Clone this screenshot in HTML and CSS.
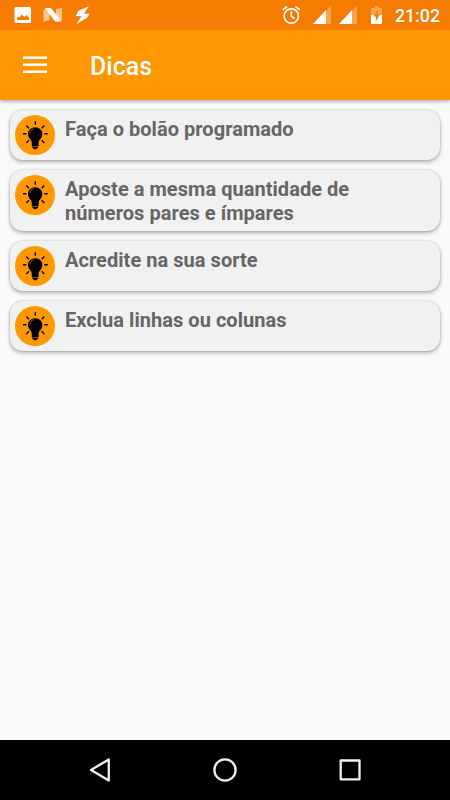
FILE: index.html
```html
<!DOCTYPE html>
<html lang="pt-BR">
<head>
<meta charset="utf-8">
<title>Dicas</title>
<link rel="stylesheet" href="styles.css">
</head>
<body>
<svg class="defs" aria-hidden="true">
  <symbol id="bulb" viewBox="0 0 40 40">
    <path d="M20.200 12.200c-4.200 0-7.200 3-7.200 6.700 0 3 1.700 4.700 3 6.300.6.900.8 2.700.8 3.800h6.800c0-1.100.2-2.900.8-3.800 1.300-1.600 3-3.300 3-6.300 0-3.700-3-6.700-7.200-6.700z"/>
    <path d="M16.800 28.800h6.800v2.300h-6.800zM16.900 31.500h6.600l-.7 1.600h-5.200zM18 33h4.400l-1 1.200h-2.400z"/>
    <path class="rays" d="M20.300 6.300v3.500M11.300 10.500l2.600 2.800M29.300 10.500l-2.600 2.800M8 18.800h3.400M29.300 18.800h3.500M11.300 28l2.700-2.700M29.300 28l-2.700-2.700"/>
    <path class="shine" d="M15 18c.1-2.300 1.500-3.800 3.500-4.200"/>
  </symbol>
</svg>
<div class="screen">
  <div class="status">
    <svg width="100" height="30" viewBox="0 0 100 30">
      <path fill="#fff" fill-rule="evenodd" d="M16 7h13.500q1.500 0 1.500 1.500V21.500q0 1.500-1.500 1.500H16q-1.500 0-1.500-1.500V8.500Q14.500 7 16 7zM17 20h12v-2.500l-2.500-2.500-2 2-3-2.500-2 3-1-1L17 18z"/>
      <path fill="#fff" opacity=".55" d="M43.500 9.500l6-1.500v12l-6 2zM56 9l6-1v12.500l-6 1.500z"/>
      <path fill="#fff" d="M45 8h6l10.500 13.500H55z"/>
      <path fill="#fff" d="M89 6.300L78.300 10.800 75.800 16l5.700.2L76.200 24.200 87.500 17.500l2-3.700-5.800-.1z"/>
    </svg>
    <div class="status-right">
      <svg width="110" height="30" viewBox="280 0 110 30">
        <g fill="none" stroke="#fff" stroke-width="1.700"><circle cx="291.300" cy="16" r="7.200"/><path d="M291.300 11.300v5l3.500 2.300M282.800 9.900l4.300-3.400M299.800 9.900l-4.300-3.400"/></g>
        <path fill="#fff" opacity=".3" d="M331 6v18h-18zM357 6v18h-18z"/>
        <path fill="#fff" d="M326 10v14h-13zM352 10v14h-13z"/>
        <path fill="#fff" opacity=".3" d="M371 8h3.500V6h4v2h3.500v7h-11z"/>
        <path fill="#fff" d="M371 15h11v8q0 1-1 1h-9q-1 0-1-1z"/>
        <path fill="#f57c00" d="M378 10l-4.500 6.500h2.500v4.500l4-6.500h-2.500z"/>
      </svg>
      <span class="time">21:02</span>
    </div>
  </div>
  <header class="bar">
    <svg width="24" height="18" viewBox="0 0 24 18"><path fill="#fff" d="M0 .5h24v2.600H0zM0 7.500h24v2.600H0zM0 14.500h24v2.600H0z"/></svg>
    <h1>Dicas</h1>
  </header>
  <main class="list">
    <article class="card"><svg class="icon"><use href="#bulb"/></svg><p>Faça o bolão programado</p></article>
    <article class="card two-lines"><svg class="icon"><use href="#bulb"/></svg><p>Aposte a mesma quantidade de<br>números pares e ímpares</p></article>
    <article class="card"><svg class="icon"><use href="#bulb"/></svg><p>Acredite na sua sorte</p></article>
    <article class="card"><svg class="icon"><use href="#bulb"/></svg><p>Exclua linhas ou colunas</p></article>
  </main>
  <nav class="nav">
    <svg width="450" height="60" viewBox="0 0 450 60" fill="none" stroke="#f0f0f0" stroke-width="2.300" stroke-linejoin="round">
      <path d="M91 30l17.800-10.600v21.200z"/><circle cx="225" cy="30" r="10.600"/><rect x="340.700" y="20.500" width="18.800" height="18.800"/>
    </svg>
  </nav>
</div>
</body>
</html>
```

FILE: styles.css
```css
* { box-sizing: border-box; }
body { margin: 0; font-family: Roboto, sans-serif; }
svg { display: block; flex: none; }
.defs { display: none; }
.screen { width: 450px; height: 800px; display: flex; flex-direction: column; background: #fafafa; overflow: hidden; }
.status { position: relative; z-index: 1; height: 30px; flex: none; display: flex; justify-content: space-between; background: #f57c00; }
.status-right { display: flex; align-items: center; padding-right: 10px; }
.time { width: 50px; padding-top: 1px; text-align: right; color: #fff; font-size: 17.8px; font-weight: 500; line-height: 30px; white-space: nowrap; }
.bar { height: 70px; flex: none; display: flex; align-items: center; gap: 43px; padding-left: 23px; background: #ff9800; box-shadow: 0 1px 4px rgba(0, 0, 0, .4); }
.bar h1 { margin: 4px 0 0; color: #fff; font-size: 25px; font-weight: 500; line-height: 30px; }
.list { flex: 1; display: flex; flex-direction: column; gap: 10px; padding: 10px; }
.card { height: 50px; display: flex; gap: 10px; padding: 5px; border-radius: 13px; background: #f1f1f1; box-shadow: 0 2px 4px rgba(0, 0, 0, .3), 0 0 2px rgba(0, 0, 0, .2); }
.two-lines { height: 61px; }
.icon { width: 40px; height: 40px; border-radius: 50%; background: #ff9800; }
.rays { fill: none; stroke: #000; stroke-width: 1.4; }
.shine { fill: none; stroke: #ff9800; stroke-width: .6; stroke-linecap: round; }
.card p { margin: 2px 0 0; color: #666; font-size: 20px; font-weight: 700; line-height: 24px; letter-spacing: .04px; white-space: nowrap; }
.nav { height: 60px; flex: none; background: #000; }
```
